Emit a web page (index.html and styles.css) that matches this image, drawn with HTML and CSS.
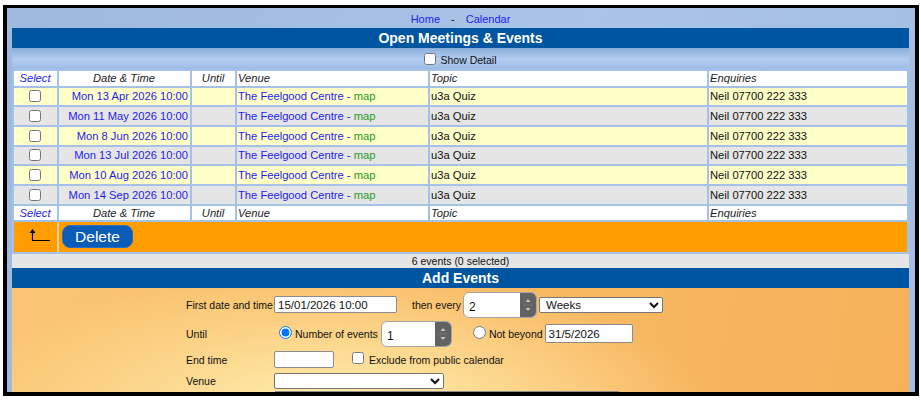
FILE: index.html
```html
<!DOCTYPE html>
<html lang="en">
<head>
    <meta charset="UTF-8">
    <meta name="viewport" content="width=device-width, initial-scale=1.0">
    <title>Open Meetings &amp; Events</title>
    <link rel="stylesheet" href="styles.css">
</head>
<body>
    <div class="frame">
        <div class="nav">
            <a href="#">Home</a><span class="sep">-</span><a href="#">Calendar</a>
        </div>

        <h2 class="bar">Open Meetings &amp; Events</h2>
        <div class="detail">
            <label><input type="checkbox"> Show Detail</label>
        </div>

        <table class="events">
            <colgroup>
                <col class="colSelect">
                <col class="colDate">
                <col class="colUntil">
                <col class="colVenue">
                <col class="colTopic">
                <col class="colEnq">
            </colgroup>
            <thead>
                <tr>
                    <th class="center selHead">Select</th>
                    <th class="center">Date &amp; Time</th>
                    <th class="center">Until</th>
                    <th>Venue</th>
                    <th>Topic</th>
                    <th>Enquiries</th>
                </tr>
            </thead>
            <tbody>
                <tr class="yellow">
                    <td class="center"><input type="checkbox"></td>
                    <td class="date">Mon 13 Apr 2026 10:00</td>
                    <td></td>
                    <td class="venue">The Feelgood Centre - <span class="map">map</span></td>
                    <td>u3a Quiz</td>
                    <td>Neil 07700 222 333</td>
                </tr>
                <tr class="grey">
                    <td class="center"><input type="checkbox"></td>
                    <td class="date">Mon 11 May 2026 10:00</td>
                    <td></td>
                    <td class="venue">The Feelgood Centre - <span class="map">map</span></td>
                    <td>u3a Quiz</td>
                    <td>Neil 07700 222 333</td>
                </tr>
                <tr class="yellow">
                    <td class="center"><input type="checkbox"></td>
                    <td class="date">Mon 8 Jun 2026 10:00</td>
                    <td></td>
                    <td class="venue">The Feelgood Centre - <span class="map">map</span></td>
                    <td>u3a Quiz</td>
                    <td>Neil 07700 222 333</td>
                </tr>
                <tr class="grey">
                    <td class="center"><input type="checkbox"></td>
                    <td class="date">Mon 13 Jul 2026 10:00</td>
                    <td></td>
                    <td class="venue">The Feelgood Centre - <span class="map">map</span></td>
                    <td>u3a Quiz</td>
                    <td>Neil 07700 222 333</td>
                </tr>
                <tr class="yellow">
                    <td class="center"><input type="checkbox"></td>
                    <td class="date">Mon 10 Aug 2026 10:00</td>
                    <td></td>
                    <td class="venue">The Feelgood Centre - <span class="map">map</span></td>
                    <td>u3a Quiz</td>
                    <td>Neil 07700 222 333</td>
                </tr>
                <tr class="grey">
                    <td class="center"><input type="checkbox"></td>
                    <td class="date">Mon 14 Sep 2026 10:00</td>
                    <td></td>
                    <td class="venue">The Feelgood Centre - <span class="map">map</span></td>
                    <td>u3a Quiz</td>
                    <td>Neil 07700 222 333</td>
                </tr>
            </tbody>
            <tfoot>
                <tr>
                    <th class="center selHead">Select</th>
                    <th class="center">Date &amp; Time</th>
                    <th class="center">Until</th>
                    <th>Venue</th>
                    <th>Topic</th>
                    <th>Enquiries</th>
                </tr>
                <tr class="actions">
                    <td class="center">
                        <!-- arrow pointing back up at the ticked rows -->
                        <svg class="upArrow" width="24" height="14" viewBox="0 0 24 14">
                            <path d="M4.5 3 V11.5 H22" fill="none" stroke="#000" stroke-width="1.2"/>
                            <path d="M1.5 4 L4.5 0 L7.5 4 Z" fill="#000"/>
                        </svg>
                    </td>
                    <td colspan="5"><button class="deleteBtn" type="button">Delete</button></td>
                </tr>
            </tfoot>
        </table>

        <div class="count">6 events (0 selected)</div>

        <h2 class="bar">Add Events</h2>
        <div class="addEvents">
            <div class="formRow rowFirst">
                <span class="lbl">First date and time</span>
                <input class="txt firstDate" type="text" value="15/01/2026 10:00">
                <span class="every">then every</span>
                <span class="num numEvery">
                    <span class="numVal">2</span>
                    <span class="spin">
                        <svg width="16" height="24" viewBox="0 0 16 24">
                            <path d="M5.5 9 L8 6 L10.5 9 Z" fill="#c4c4c4"/>
                            <line x1="3" y1="12" x2="13" y2="12" stroke="#777" stroke-width="1"/>
                            <path d="M5.5 15 L8 18 L10.5 15 Z" fill="#c4c4c4"/>
                        </svg>
                    </span>
                </span>
                <select class="sel weeks">
                    <option>Weeks</option>
                    <option>Days</option>
                    <option>Months</option>
                </select>
            </div>

            <div class="formRow rowUntil">
                <span class="lbl">Until</span>
                <input class="radio" type="radio" name="until" checked>
                <span>Number of events</span>
                <span class="num numCount">
                    <span class="numVal">1</span>
                    <span class="spin">
                        <svg width="16" height="24" viewBox="0 0 16 24">
                            <path d="M5.5 9 L8 6 L10.5 9 Z" fill="#c4c4c4"/>
                            <line x1="3" y1="12" x2="13" y2="12" stroke="#777" stroke-width="1"/>
                            <path d="M5.5 15 L8 18 L10.5 15 Z" fill="#c4c4c4"/>
                        </svg>
                    </span>
                </span>
                <input class="radio radioBeyond" type="radio" name="until">
                <span>Not beyond</span>
                <input class="txt beyond" type="text" value="31/5/2026">
            </div>

            <div class="formRow rowEnd">
                <span class="lbl">End time</span>
                <input class="txt endTime" type="text">
                <input class="check" type="checkbox">
                <span>Exclude from public calendar</span>
            </div>

            <div class="formRow rowVenue">
                <span class="lbl">Venue</span>
                <select class="sel venueSel">
                    <option></option>
                    <option>The Feelgood Centre</option>
                </select>
            </div>

            <div class="formRow rowTopic">
                <span class="lbl"></span>
                <input class="txt topic" type="text">
            </div>
        </div>
    </div>
</body>
</html>
```

FILE: styles.css
```css
body {
    margin: 0;
    padding: 5px 0 0 3px;
    background: #fff;
    font-family: "Liberation Sans", Arial, sans-serif;
    font-size: 11px;
    color: #111;
}

.frame {
    box-sizing: border-box;
    width: 916px;
    height: 391px;
    border: 4px solid #000;
    border-top-width: 3px;
    padding: 0 6px 0 5px;
    overflow: hidden;
    background: linear-gradient(100deg, #9fb8dd, #aac3e6 60%, #a4bee3);
}

.nav {
    height: 20px;
    line-height: 22px;
    text-align: center;
}

.nav a {
    color: #1d1df0;
    text-decoration: none;
}

.sep {
    margin: 0 11px;
}

.bar {
    margin: 0;
    height: 20px;
    line-height: 20px;
    background: #0055a0;
    color: #fff;
    font-size: 14px;
    font-weight: bold;
    text-align: center;
}

.detail {
    height: 21px;
    display: flex;
    justify-content: center;
    align-items: center;
    font-size: 10.5px;
    background: linear-gradient(#8aaedc, #b3cbef 55%, #9cbce6);
}

.detail label {
    display: flex;
    align-items: center;
    padding-top: 2px;
}

.detail input {
    width: 12px;
    height: 12px;
    margin: -2px 4px 0 0;
}

/* events table: the blue table background shows through the cell spacing */
.events {
    width: 897px;
    border-collapse: separate;
    border-spacing: 2px;
    table-layout: fixed;
    background: #a6c1e7;
    font-size: 11.2px;
}

.colSelect { width: 43px; }
.colDate { width: 131px; }
.colUntil { width: 43px; }
.colVenue { width: 191px; }
.colTopic { width: 277px; }
.colEnq { width: 198px; }

.events td,
.events th {
    height: 17.7px;
    padding: 0 2px 0 1px;
    line-height: 14px;
    white-space: nowrap;
    overflow: hidden;
    text-align: left;
}

.events th {
    height: 14.5px;
    background: #fff;
    font-style: italic;
    font-weight: normal;
    color: #222;
}

.events .center {
    text-align: center;
}

.events th.selHead {
    color: #1d1df0;
}

.events td input {
    width: 12px;
    height: 12px;
    margin: 0;
    vertical-align: -2px;
}

.yellow td {
    background: #ffffc8;
}

.grey td {
    background: #e5e5e5;
}

.events td.date {
    text-align: right;
    color: #1d1df0;
}

.venue {
    color: #1d1df0;
}

.map {
    color: #1f9a1f;
}

.events .actions td {
    height: 29.5px;
    padding: 0 2px 0 3px;
    background: #ff9c00;
}

/* pale divider between the arrow and the button cell */
.events .actions td:first-child {
    padding-left: 1px;
    box-shadow: 2px 0 0 #e9cca0;
}

.upArrow {
    display: block;
    margin: 0 0 1px 13px;
}

.deleteBtn {
    display: block;
    height: 23px;
    width: 71px;
    padding: 0;
    border: 1px solid #2c6cc2;
    border-radius: 8px;
    background: #0a5cb6;
    color: #fff;
    font-family: "Liberation Sans", Arial, sans-serif;
    font-size: 15.5px;
    line-height: 21px;
}

.count {
    height: 14px;
    line-height: 15px;
    background: #e5e5e5;
    text-align: center;
    font-size: 10.5px;
}

/* add events form */
.addEvents {
    height: 120px;
    padding: 4px 0 0 174px;
    font-size: 10.5px;
    background:
        radial-gradient(ellipse 380px 150px at 320px 130px, #fff2b4 0%, #fddd96 40%, rgba(250, 196, 112, 0) 100%),
        linear-gradient(100deg, #f9c672, #f8ba64 50%, #f6b05a);
}

.formRow {
    display: flex;
    align-items: center;
}

.lbl {
    width: 88px;
    flex: none;
}

.rowFirst {
    height: 26px;
    margin-bottom: 3px;
}

.rowUntil {
    height: 26px;
    margin-bottom: 2px;
}

.rowEnd {
    height: 22px;
    margin-bottom: 1px;
}

.rowVenue {
    height: 19px;
}

.rowTopic {
    height: 20px;
    align-items: flex-start;
}

.txt {
    box-sizing: border-box;
    height: 17px;
    padding: 0 3px;
    border: 1px solid #8c8c8c;
    border-radius: 2px;
    background: #fff;
    font-family: "Liberation Sans", Arial, sans-serif;
    font-size: 11.5px;
    color: #111;
}

.firstDate {
    width: 123px;
}

.every {
    margin: 0 2px 0 15px;
}

.num {
    box-sizing: border-box;
    display: inline-flex;
    height: 26px;
    border: 1px solid #a4a4a4;
    border-radius: 6px;
    background: #fff;
    overflow: hidden;
}

.numVal {
    flex: 1;
    padding: 7px 0 0 5px;
    font-size: 12px;
}

.spin {
    width: 16px;
    display: flex;
    align-items: center;
    background: #626262;
}

.numEvery {
    width: 74px;
}

.numCount {
    width: 71px;
    margin-left: 3px;
}

.sel {
    box-sizing: border-box;
    height: 16px;
    padding: 0 0 0 2px;
    border: 1px solid #767676;
    border-radius: 2px;
    background: #fff;
    font-family: "Liberation Sans", Arial, sans-serif;
    font-size: 11.5px;
    color: #111;
}

.weeks {
    width: 124px;
    margin-left: 2px;
}

.venueSel {
    width: 170px;
}

.radio {
    width: 13px;
    height: 13px;
    margin: -2px 3px 0 5px;
}

.radioBeyond {
    margin-left: 21px;
}

.beyond {
    width: 88px;
    height: 19px;
    margin-left: 2px;
}

.endTime {
    width: 60px;
}

.check {
    width: 12px;
    height: 12px;
    margin: -3px 5px 0 18px;
}

.topic {
    width: 346px;
    height: 18px;
}
```
